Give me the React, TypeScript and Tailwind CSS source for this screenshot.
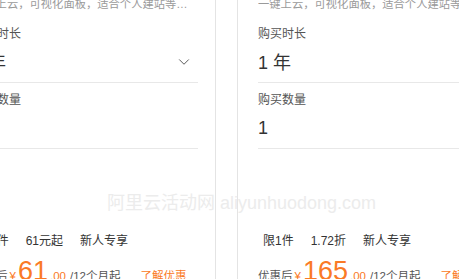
import { ChevronDown } from "lucide-react";

const cards = [
  { duration: "1 年", tags: ["限1件", "61元起", "新人专享"], price: "61" },
  { duration: "1 年", tags: ["限1件", "1.72折", "新人专享"], price: "165" },
];

const Card = ({ duration, tags, price }: { duration: string; tags: string[]; price: string }) => (
  <div className="w-[264px] shrink-0 border-x border-[#e4e4e4] pl-[20px] pr-[17px]">
    <p className="h-[18px] truncate text-[11.3px] leading-[18px] text-[#9a9a9a]">
      一键上云，可视化面板，适合个人建站等场景使用
    </p>

    <div className="mt-[11px] text-[12px] leading-[20px] text-[#555]">购买时长</div>
    <div className="mt-[5px] flex h-[34px] items-start justify-between border-b border-[#e8e8e8]">
      <span className="text-[18px] leading-[28px] text-[#333]">{duration}</span>
      <ChevronDown className="mr-[5px] mt-[4px] h-[18px] w-[18px] text-[#555]" strokeWidth={1.3} />
    </div>

    <div className="mt-[7px] text-[12px] leading-[20px] text-[#555]">购买数量</div>
    <div className="mt-[4px] h-[35px] border-b border-[#e8e8e8]">
      <span className="text-[18px] leading-[28px] text-[#333]">1</span>
    </div>

    <div className="mt-[82px] flex gap-[7px] text-[12px] leading-[20px] text-[#333]">
      {tags.map((t) => (
        <span key={t} className="px-[5px]">
          {t}
        </span>
      ))}
    </div>

    <div className="mt-[4px] flex items-baseline whitespace-nowrap text-[11.5px] text-[#555]">
      <span>优惠后</span>
      <span className="ml-[2px] text-[#fa7a26]">¥</span>
      <span className="ml-[2px] text-[27px] leading-[32px] text-[#fa7a26]">{price}</span>
      <span className="ml-[2px] text-[#fa7a26]">.00</span>
      <span className="ml-[4px]">/12个月起</span>
      <span className="ml-[20px] text-[#fa7a26]">了解优惠</span>
    </div>
  </div>
);

export default function App() {
  return (
    <div
      className="relative h-[279px] w-[459px] overflow-hidden bg-white"
      style={{ fontFamily: '"Liberation Sans", "Noto Sans CJK SC", sans-serif' }}
    >
      <div className="-mt-[5px] ml-[-48px] flex gap-[21px]">
        {cards.map((c) => (
          <Card key={c.price} {...c} />
        ))}
      </div>

      {/* watermark */}
      <div className="pointer-events-none absolute left-[107px] top-[192px] whitespace-nowrap text-[18px] leading-[22px] text-[#ececec]">
        阿里云活动网 aliyunhuodong.com
      </div>
    </div>
  );
}
